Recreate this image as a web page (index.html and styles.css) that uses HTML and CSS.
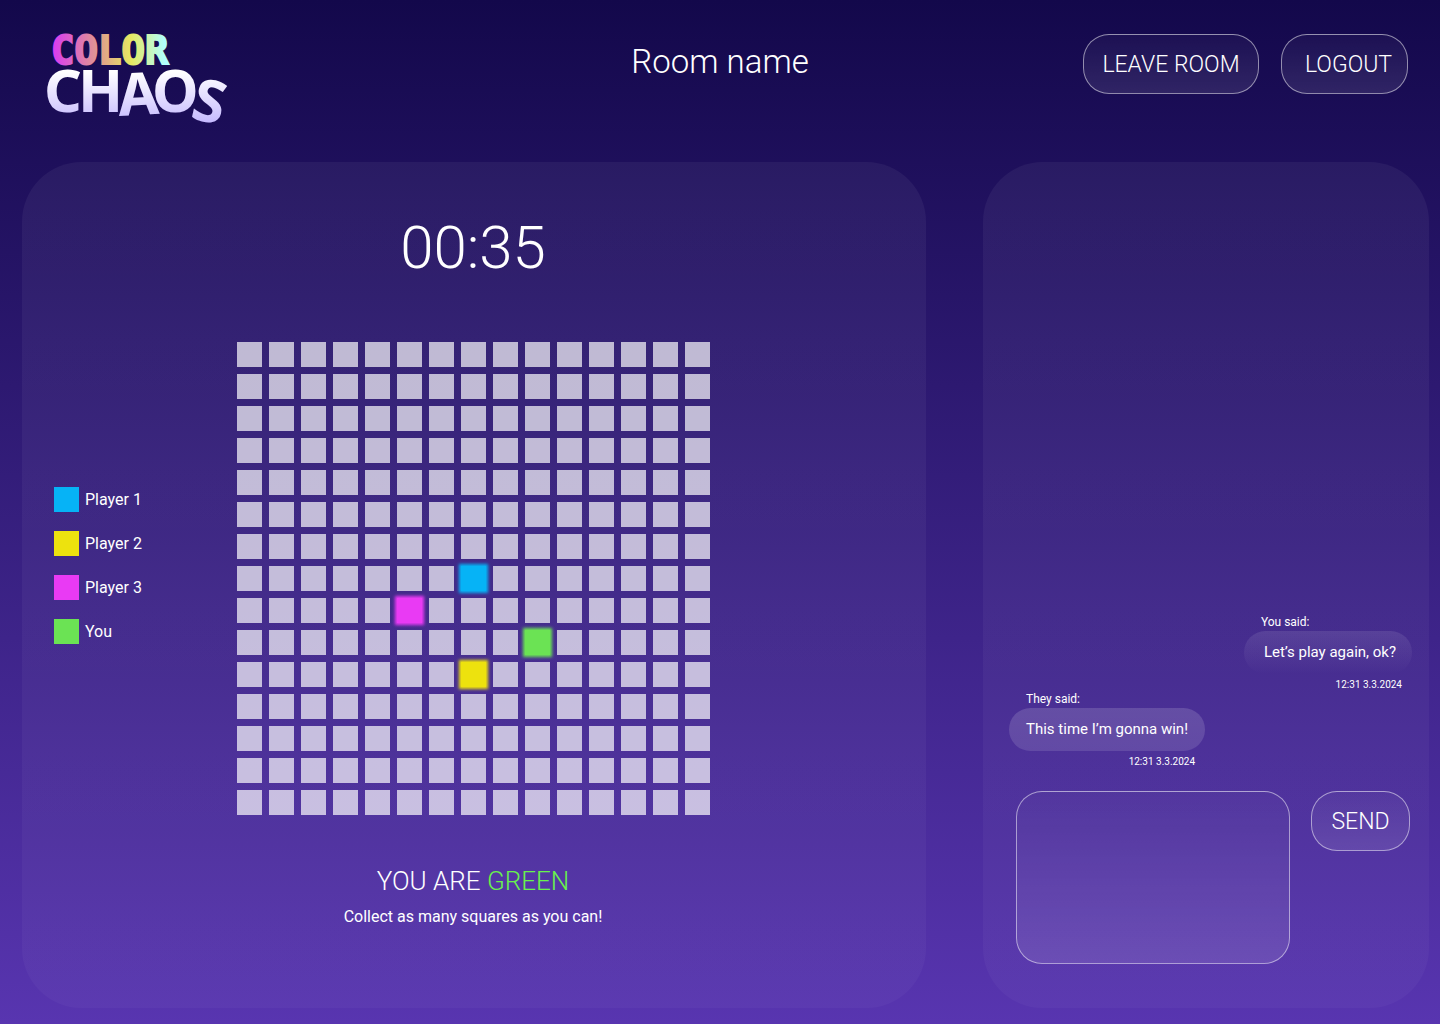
FILE: index.html
```html
<!DOCTYPE html>
<html lang="en">
<head>
  <meta charset="utf-8">
  <meta name="viewport" content="width=device-width, initial-scale=1">
  <title>Color Chaos</title>
  <link rel="stylesheet" href="styles.css">
</head>
<body>
  <header class="header">
    <svg class="logo" width="184" height="96" viewBox="0 0 184 96" role="img" aria-label="Color Chaos">
      <defs>
        <linearGradient id="rainbow" gradientUnits="userSpaceOnUse" x1="6" y1="0" x2="118" y2="0">
          <stop offset="0" stop-color="#d93cf0"/>
          <stop offset="0.4" stop-color="#e0988f"/>
          <stop offset="0.7" stop-color="#e6ea62"/>
          <stop offset="1" stop-color="#b0ffff"/>
        </linearGradient>
        <linearGradient id="frost" gradientUnits="userSpaceOnUse" x1="0" y1="40" x2="0" y2="92">
          <stop offset="0" stop-color="#ffffff"/>
          <stop offset="1" stop-color="#c4b8ff"/>
        </linearGradient>
      </defs>
      <text class="logo-color" x="4" y="32" fill="url(#rainbow)" stroke="url(#rainbow)">COLOR</text>
      <text class="logo-chaos" x="-3 31 72 105 142" y="80 80 84 80 86" rotate="0 0 -3 0 13" fill="url(#frost)">CHAOS</text>
    </svg>
    <h1 class="room">Room name</h1>
    <nav class="actions">
      <button class="btn btn-leave" type="button">LEAVE ROOM</button>
      <button class="btn btn-logout" type="button">LOGOUT</button>
    </nav>
  </header>

  <main class="main">
    <section class="panel game">
      <div class="timer">00:35</div>
      <div class="arena">
        <ul class="legend">
          <li><span class="swatch blue"></span>Player 1</li>
          <li><span class="swatch yellow"></span>Player 2</li>
          <li><span class="swatch pink"></span>Player 3</li>
          <li><span class="swatch green"></span>You</li>
        </ul>
        <div class="board" id="board"></div>
      </div>
      <h2 class="role">YOU ARE <span class="role-color">GREEN</span></h2>
      <p class="hint">Collect as many squares as you can!</p>
    </section>

    <section class="panel chat">
      <div class="messages">
        <article class="message mine">
          <div class="author">You said:</div>
          <p class="bubble">Let’s play again, ok?</p>
          <time class="time">12:31 3.3.2024</time>
        </article>
        <article class="message">
          <div class="author">They said:</div>
          <p class="bubble">This time I’m gonna win!</p>
          <time class="time">12:31 3.3.2024</time>
        </article>
      </div>
      <form class="composer">
        <textarea class="input" aria-label="Message"></textarea>
        <button class="btn" type="button">SEND</button>
      </form>
    </section>
  </main>
  <script src="script.js"></script>
</body>
</html>
```
FILE: styles.css
```css
* {
  box-sizing: border-box;
}

body {
  margin: 0;
  min-height: 100vh;
  display: flex;
  flex-direction: column;
  font-family: Roboto, "Liberation Sans", sans-serif;
  font-size: 16px;
  line-height: 20px;
  color: #fff;
  background: linear-gradient(#13084b, #5835b0) no-repeat;
}

h1, h2, p, ul {
  margin: 0;
  padding: 0;
  font-weight: 400;
}

.header {
  display: grid;
  grid-template-columns: 1fr auto 1fr;
  align-items: start;
  padding: 32px 32px 34px;
}

.logo {
  display: block;
  margin-left: 15px;
  overflow: visible;
}

.logo-color {
  font: bold 39px "DejaVu Sans Mono", monospace;
  stroke-width: 2px;
}

.logo-chaos {
  font: 700 59px "Noto Sans", sans-serif;
}

.room {
  font-size: 33px;
  font-weight: 350;
  line-height: 60px;
}

.actions {
  display: flex;
  justify-content: flex-end;
  gap: 22px;
  padding-top: 2px;
}

.btn {
  min-width: 99px;
  height: 60px;
  padding: 0 18px;
  border: 1px solid rgba(255, 255, 255, 0.5);
  border-radius: 26px;
  background: linear-gradient(rgba(255, 255, 255, 0.03), rgba(255, 255, 255, 0.1));
  color: #fff;
  font: 350 23px Roboto, sans-serif;
  white-space: nowrap;
  cursor: pointer;
}

.btn-leave {
  min-width: 176px;
}

.btn-logout {
  min-width: 127px;
  padding: 0 14px 0 22px;
}

.main {
  flex: 1;
  display: grid;
  grid-template-columns: 904fr 446fr;
  gap: 57px;
  padding: 0 11px 16px 22px;
}

.panel {
  border-radius: 60px;
  background: linear-gradient(rgba(255, 255, 255, 0.05), rgba(255, 255, 255, 0.03));
}

.game {
  padding: 48px 34px 80px 32px;
  text-align: center;
}

.timer {
  font-size: 60px;
  font-weight: 350;
  line-height: 76px;
}

.arena {
  display: grid;
  grid-template-columns: 1fr auto 1fr;
  align-items: start;
  margin-top: 56px;
}

.legend {
  display: grid;
  gap: 19px;
  padding-top: 145px;
  list-style: none;
}

.legend li {
  display: flex;
  align-items: center;
  gap: 6px;
}

.swatch {
  width: 25px;
  height: 25px;
}

.board {
  display: grid;
  grid-template-columns: repeat(15, 25px);
  grid-auto-rows: 25px;
  gap: 7px;
}

.cell {
  background: rgba(255, 255, 255, 0.69);
}

.cell.taken {
  box-shadow: 0 0 3px 2px currentColor;
}

.blue {
  color: #06b3f6;
  background: #06b3f6;
}

.yellow {
  color: #ede20e;
  background: #ede20e;
}

.pink {
  color: #e93af4;
  background: #e93af4;
}

.green {
  color: #6be354;
  background: #6be354;
}

.role {
  margin-top: 48px;
  font-size: 26px;
  font-weight: 350;
  line-height: 36px;
}

.role-color {
  color: #69f24c;
}

.hint {
  margin-top: 8px;
}

.chat {
  display: flex;
  flex-direction: column;
  justify-content: flex-end;
  padding: 0 19px 44px 33px;
}

.messages {
  display: flex;
  flex-direction: column;
  align-items: flex-start;
  margin: 0 -2px 24px -7px;
}

.message {
  display: grid;
}

.mine {
  align-self: flex-end;
}

.author {
  padding-left: 17px;
  font-size: 12px;
  line-height: 18px;
}

.bubble {
  padding: 0 17px;
  border-radius: 22px;
  background: linear-gradient(rgba(255, 255, 255, 0.15), rgba(255, 255, 255, 0.12));
  font-size: 15px;
  line-height: 43px;
}

.mine .bubble {
  padding: 0 16px 0 20px;
  background: linear-gradient(rgba(255, 255, 255, 0.1), rgba(255, 255, 255, 0));
}

.time {
  padding: 6px 10px 0 0;
  font-size: 10px;
  line-height: 10px;
  text-align: right;
}

.composer {
  display: flex;
  align-items: flex-start;
  gap: 21px;
}

.input {
  flex: 1;
  min-width: 0;
  height: 173px;
  padding: 20px;
  border: 1px solid rgba(255, 255, 255, 0.5);
  border-radius: 26px;
  background: linear-gradient(rgba(255, 255, 255, 0.02), rgba(255, 255, 255, 0.11));
  color: #fff;
  font: inherit;
  resize: none;
}
```
FILE: script.js
```js
const SIZE = 15;
const players = {
  "7,7": "blue",
  "8,5": "pink",
  "9,9": "green",
  "10,7": "yellow",
};

const board = document.getElementById("board");
for (let row = 0; row < SIZE; row++) {
  for (let col = 0; col < SIZE; col++) {
    const cell = document.createElement("span");
    const player = players[`${row},${col}`];
    cell.className = player ? `cell taken ${player}` : "cell";
    board.append(cell);
  }
}
```
